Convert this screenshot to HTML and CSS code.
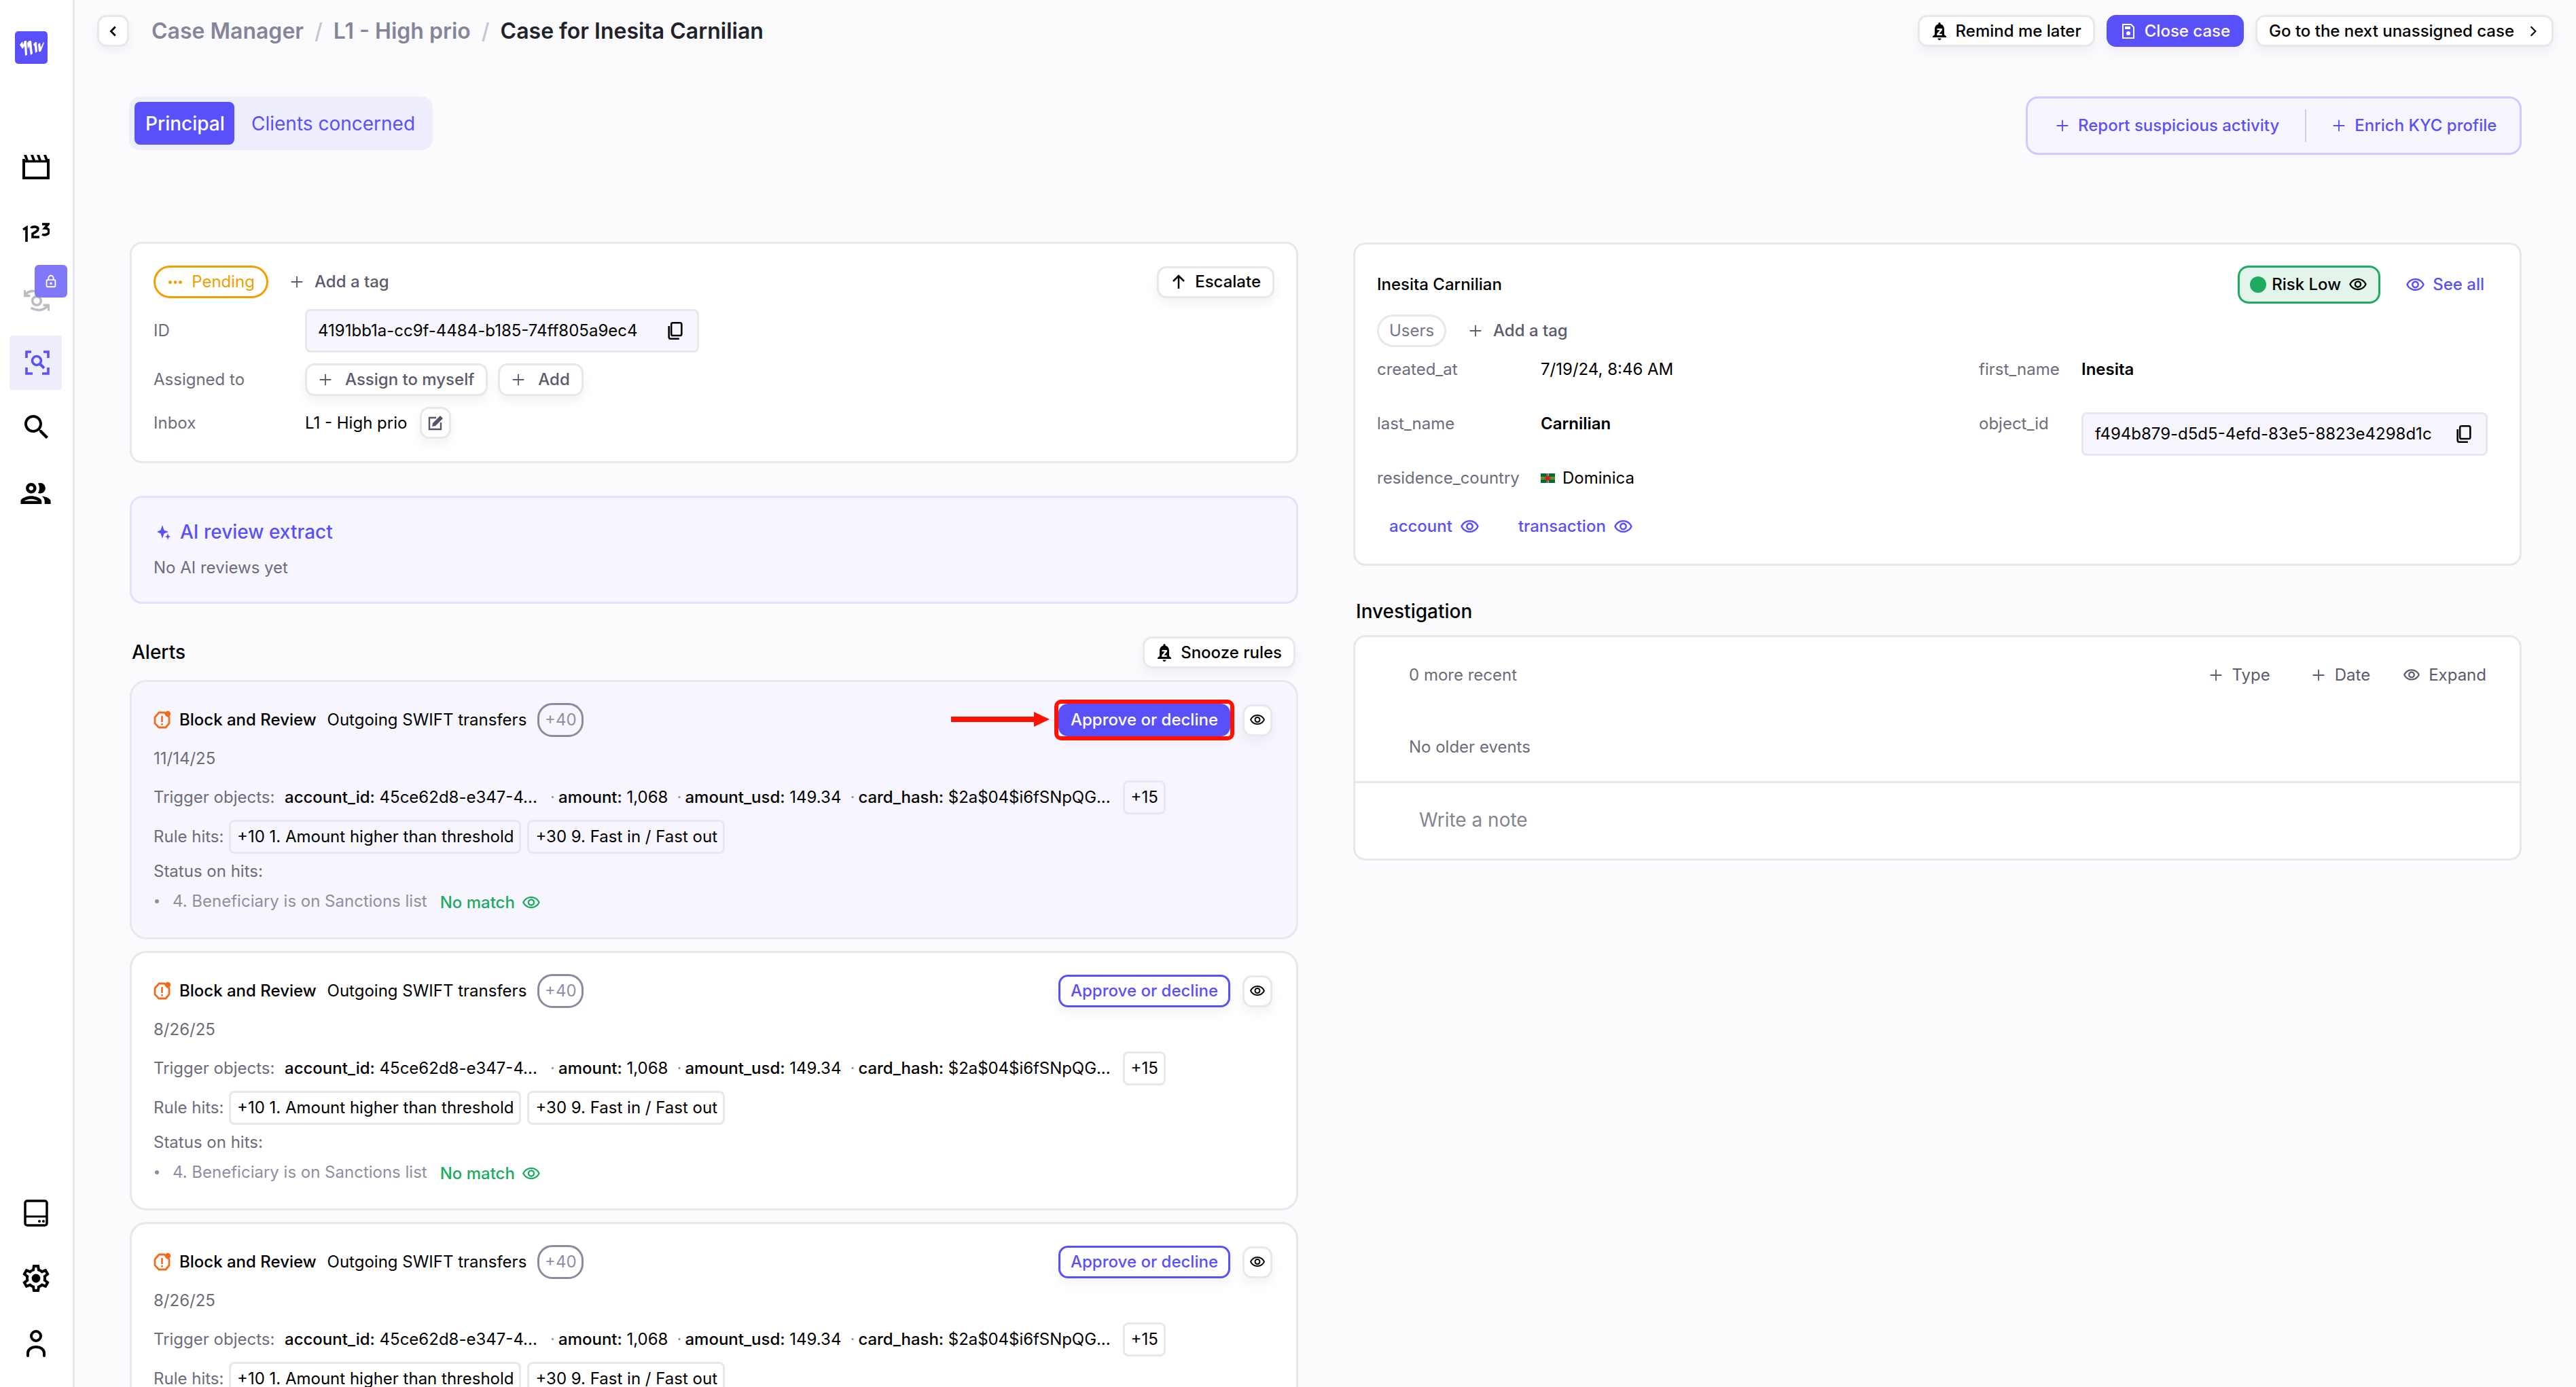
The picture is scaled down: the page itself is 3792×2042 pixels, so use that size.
FILE: index.html
```html
<!DOCTYPE html>
<html lang="en">
<head>
<meta charset="utf-8">
<title>Case for Inesita Carnilian</title>
<link rel="stylesheet" href="styles.css">
</head>
<body>
<svg class="defs" aria-hidden="true">
  <symbol id="eye" viewBox="0 0 24 24"><path fill="currentColor" d="M12 6c3.79 0 7.17 2.13 8.82 5.5C19.17 14.87 15.79 17 12 17s-7.17-2.13-8.82-5.5C4.83 8.13 8.21 6 12 6m0-2C7 4 2.73 7.11 1 11.5 2.73 15.89 7 19 12 19s9.27-3.11 11-7.5C21.27 7.11 17 4 12 4zm0 5c1.38 0 2.5 1.12 2.5 2.5S13.38 14 12 14s-2.5-1.12-2.5-2.5S10.62 9 12 9m0-2c-2.48 0-4.5 2.02-4.5 4.5S9.52 16 12 16s4.5-2.02 4.5-4.5S14.48 7 12 7z"/></symbol>
  <symbol id="plus" viewBox="0 0 24 24"><path fill="none" stroke="currentColor" stroke-width="2.2" d="M12 2v20M2 12h20"/></symbol>
  <symbol id="bell" viewBox="0 0 24 28"><path fill="currentColor" fill-rule="evenodd" d="M12 1c1 0 1.6.8 1.6 1.8v.8C17 4.600 19 7.500 19 11v8l3 2.500V23H2v-1.500L5 19v-8c0-3.500 2-6.400 5.400-7.400v-.8C10.400 1.800 11 1 12 1zM8.500 10v2.200h4.200l-4.400 5.400V20h7.400v-2.200h-4.200l4.400-5.400V10zM9.500 24.500h5c0 1.500-1 2.500-2.500 2.500s-2.500-1-2.500-2.500z"/></symbol>
  <symbol id="copy" viewBox="0 0 24 24"><path fill="none" stroke="currentColor" stroke-width="2.2" d="M9 2h9a2 2 0 0 1 2 2v12a2 2 0 0 1-2 2H9a2 2 0 0 1-2-2V4a2 2 0 0 1 2-2zM4 6v14a2 2 0 0 0 2 2h11"/></symbol>
  <symbol id="warn" viewBox="0 0 26 28"><path fill="none" stroke="currentColor" stroke-width="2.800" d="M8 3h8l7 7v9l-5 6H8l-6-6v-9z"/><path fill="currentColor" d="M11.200 8h2.600v9h-2.600zM11.200 19h2.600v2.600h-2.600z"/><circle cx="21" cy="5" r="4.200" fill="currentColor"/></symbol>
</svg>

<div class="app">
  <nav class="sidebar">
    <div class="logo">
      <svg viewBox="0 0 48 48" class="logo-mark"><path fill="#fff" d="M7 20l4-5 1 5 2-6h3l1 21-3 1-1-14-3 4zM18 17l3-3h3l2 19-3 2-2-13-2 4zM27 19l3-3 2 0 1 14-3 2-1-9zM34 19l3-2 1 7 4-8 1 1-5 13-3 0z"/></svg>
    </div>
    <div class="nav-main">
      <a class="nav-item nav-film">
        <svg viewBox="0 0 40 36" class="ic-film"><path fill="none" stroke="#000" stroke-width="4" d="M2 6v28h36V6"/><path fill="none" stroke="#000" stroke-width="3.400" d="M0 9.500h40"/><path fill="#000" d="M2 0h4l3 8H5zM12 0h4l3 8h-4zM21 0h4l3 8h-4zM31 0h4l3 8h-4z"/></svg>
      </a>
      <a class="nav-item nav-num">
        <svg viewBox="0 0 40 28" class="ic-num"><g fill="none" stroke="#000" stroke-width="3.600"><path d="M1 10l5-3v21"/><path d="M13 8c1-3 10-3 10 1 0 3-4 5-8 7v5h10"/><path d="M29 2h9l-5 6c4 0 6 2 6 5 0 4-6 6-10 4"/></g></svg>
      </a>
      <a class="nav-item nav-locked">
        <svg viewBox="0 0 36 36" class="ic-sync"><g fill="none" stroke="#bdbdc6" stroke-width="3.500"><path d="M2 8c4-6 12-8 22-2M1 1v8h8M34 22c-5 7-14 9-24 4M35 30v-8h-8"/><circle cx="18" cy="16" r="6"/></g></svg>
        <span class="lock">
          <svg viewBox="0 0 24 24" class="ic-lock"><path fill="#fff" fill-rule="evenodd" d="M12 2a5 5 0 0 1 5 5v2h1a2 2 0 0 1 2 2v9a2 2 0 0 1-2 2H6a2 2 0 0 1-2-2v-9a2 2 0 0 1 2-2h1V7a5 5 0 0 1 5-5zm0 2a3 3 0 0 0-3 3v2h6V7a3 3 0 0 0-3-3zM6 11v9h12v-9zm6 2.500a2 2 0 1 1 0 4 2 2 0 0 1 0-4z"/></svg>
        </span>
      </a>
      <a class="nav-item nav-active">
        <svg viewBox="0 0 36 36" class="ic-scan"><g fill="none" stroke="#5a50fa" stroke-width="3.600"><path d="M9 2H2v9M27 2h7v9M2 25v9h9M25 34h9v-9"/><circle cx="17" cy="15" r="6.500"/><path d="M22 20l6 6" stroke-width="4"/></g></svg>
      </a>
      <a class="nav-item nav-search">
        <svg viewBox="0 0 24 24" class="ic-48"><path fill="#000" d="M15.500 14h-.79l-.28-.27C15.410 12.590 16 11.110 16 9.500 16 5.910 13.090 3 9.500 3S3 5.910 3 9.500 5.910 16 9.500 16c1.610 0 3.090-.59 4.230-1.570l.27.28v.79l5 4.990L20.490 19l-4.990-5zm-6 0C7.010 14 5 11.990 5 9.500S7.010 5 9.500 5 14 7.010 14 9.500 11.990 14 9.500 14z"/></svg>
      </a>
      <a class="nav-item nav-users">
        <svg viewBox="0 0 24 24" class="ic-users"><path fill="#000" d="M9 13.750c-2.340 0-7 1.170-7 3.500V19h14v-1.750c0-2.330-4.660-3.500-7-3.500zM4.340 17c.84-.58 2.870-1.250 4.660-1.250s3.820.67 4.660 1.250H4.340zM9 12c1.930 0 3.500-1.570 3.500-3.500S10.930 5 9 5 5.500 6.570 5.500 8.500 7.070 12 9 12zm0-5c.83 0 1.500.67 1.500 1.500S9.830 10 9 10s-1.500-.67-1.500-1.500S8.170 7 9 7zm7.040 6.810c1.160.84 1.960 1.960 1.960 3.440V19h4v-1.750c0-2.020-3.500-3.170-5.960-3.440zM15 12c1.930 0 3.500-1.570 3.500-3.500S16.930 5 15 5c-.54 0-1.040.13-1.500.35.63.89 1 1.980 1 3.150s-.37 2.260-1 3.150c.46.22.96.35 1.500.35z"/></svg>
      </a>
    </div>
    <div class="nav-bottom">
      <a class="nav-item">
        <svg viewBox="0 0 36 40" class="ic-drive"><rect x="2" y="2" width="32" height="36" rx="3" fill="none" stroke="#000" stroke-width="3.500"/><path d="M2 25h32" stroke="#000" stroke-width="3"/><circle cx="23" cy="32" r="2" fill="#000"/><circle cx="29" cy="32" r="2" fill="#000"/></svg>
      </a>
      <a class="nav-item">
        <svg viewBox="0 0 24 24" class="ic-gear"><path fill="#000" d="M19.430 12.980c.04-.32.07-.64.07-.98 0-.34-.03-.66-.07-.98l2.110-1.650c.19-.15.24-.42.12-.64l-2-3.460c-.09-.16-.26-.25-.44-.25-.06 0-.12.01-.17.03l-2.490 1c-.52-.4-1.080-.73-1.690-.98l-.38-2.650C14.460 2.180 14.250 2 14 2h-4c-.25 0-.46.18-.49.42l-.38 2.650c-.61.25-1.170.59-1.690.98l-2.490-1c-.06-.02-.12-.03-.18-.03-.17 0-.34.09-.43.25l-2 3.460c-.13.22-.07.49.12.64l2.110 1.650c-.04.32-.07.65-.07.98 0 .33.03.66.07.98l-2.110 1.650c-.19.15-.24.42-.12.64l2 3.460c.09.16.26.25.44.25.06 0 .12-.01.17-.03l2.490-1c.52.4 1.080.73 1.690.98l.38 2.650c.03.24.24.42.49.42h4c.25 0 .46-.18.49-.42l.38-2.650c.61-.25 1.170-.59 1.690-.98l2.490 1c.06.02.12.03.18.03.17 0 .34-.09.43-.25l2-3.460c.12-.22.07-.49-.12-.64l-2.110-1.650zm-1.980-1.710c.04.31.05.52.05.73 0 .21-.02.43-.05.73l-.14 1.130.89.7 1.080.84-.7 1.210-1.270-.51-1.040-.42-.9.68c-.43.32-.84.56-1.250.73l-1.060.43-.16 1.130-.2 1.350h-1.400l-.19-1.350-.16-1.130-1.060-.43c-.43-.18-.83-.41-1.230-.71l-.91-.7-1.060.43-1.270.51-.7-1.210 1.080-.84.89-.7-.14-1.130c-.03-.31-.05-.54-.05-.74s.02-.43.05-.73l.14-1.130-.89-.7-1.080-.84.7-1.210 1.270.51 1.040.42.9-.68c.43-.32.84-.56 1.250-.73l1.060-.43.16-1.130.2-1.350h1.390l.19 1.350.16 1.130 1.060.43c.43.18.83.41 1.230.71l.91.7 1.060-.43 1.270-.51.7 1.210-1.070.85-.89.7.14 1.130z"/><circle cx="12" cy="12" r="3.200" fill="#000"/></svg>
      </a>
      <a class="nav-item">
        <svg viewBox="0 0 30 40" class="ic-user"><g fill="none" stroke="#000" stroke-width="4" stroke-linecap="round"><circle cx="15" cy="9" r="7"/><path d="M3 38v-4c0-5 5-9 12-9s12 4 12 9v4"/></g></svg>
      </a>
    </div>
  </nav>

  <main class="main">
    <header class="topbar">
      <button class="back">
        <svg viewBox="0 0 24 24" class="ic-chev"><path fill="none" stroke="#000" stroke-width="3" d="M15 5l-7 7 7 7"/></svg>
      </button>
      <div class="crumbs">
        <span class="crumb">Case Manager</span><span class="sep">/</span>
        <span class="crumb">L1 - High prio</span><span class="sep">/</span>
        <span class="crumb-now">Case for Inesita Carnilian</span>
      </div>
      <div class="top-actions">
        <button class="btn"><svg class="ic-bell"><use href="#bell"/></svg>Remind me later</button>
        <button class="btn btn-primary">
          <svg viewBox="0 0 24 24" class="ic-save"><path fill="none" stroke="#fff" stroke-width="2" d="M4 2h12l4 4v16H4z"/><path fill="#fff" d="M7 5h8v4H7z"/><circle cx="12" cy="15" r="3" fill="#fff"/></svg>
          Close case</button>
        <button class="btn">Go to the next unassigned case<svg viewBox="0 0 24 24" class="ic-next"><path fill="none" stroke="#000" stroke-width="2.500" d="M8 4l8 8-8 8"/></svg></button>
      </div>
    </header>

    <section class="tabs-row">
      <div class="tabs">
        <span class="tab tab-on">Principal</span>
        <span class="tab">Clients concerned</span>
      </div>
      <div class="panel-actions">
        <a class="pa"><svg class="ic-plus"><use href="#plus"/></svg>Report suspicious activity</a>
        <i class="pa-sep"></i>
        <a class="pa"><svg class="ic-plus"><use href="#plus"/></svg>Enrich KYC profile</a>
      </div>
    </section>

    <div class="columns">
      <div class="col-left">
        <section class="card case-card">
          <div class="case-head">
            <span class="status"><i class="dots"></i><i class="dots"></i><i class="dots dots-last"></i>Pending</span>
            <a class="add-tag"><svg class="ic-plus"><use href="#plus"/></svg>Add a tag</a>
            <button class="btn btn-right"><svg viewBox="0 0 24 24" class="ic-up"><path fill="none" stroke="#000" stroke-width="2.500" d="M12 22V3M4 11l8-8 8 8"/></svg>Escalate</button>
          </div>
          <div class="field-row"><span class="lbl">ID</span>
            <div class="code code-id"><span>4191bb1a-cc9f-4484-b185-74ff805a9ec4</span><svg class="ic-copy"><use href="#copy"/></svg></div>
          </div>
          <div class="field-row"><span class="lbl">Assigned to</span>
            <div class="btns">
              <button class="btn btn-grey"><svg class="ic-plus"><use href="#plus"/></svg>Assign to myself</button>
              <button class="btn btn-grey"><svg class="ic-plus"><use href="#plus"/></svg>Add</button>
            </div>
          </div>
          <div class="field-row"><span class="lbl">Inbox</span>
            <div class="btns btns-inbox"><span>L1 - High prio</span>
              <button class="btn btn-icon"><svg viewBox="0 0 24 24" class="ic-edit"><path fill="none" stroke="#555568" stroke-width="2.400" d="M13 4H3v17h17V11"/><path fill="#555568" d="M19 1l4 4-11 11-5 1 1-5z"/></svg></button>
            </div>
          </div>
        </section>

        <section class="card ai-card">
          <h3 class="ai-title"><svg viewBox="0 0 20 24" class="ic-spark"><path fill="#5a50fa" d="M8 2l2.500 7.500L17 12l-6.500 2.500L8 22l-2.500-7.500L0 12l5.500-2.500zM16 14l1.200 3.800L20 19l-2.800 1.200L16 24l-1.200-3.800L12 19l2.800-1.200z"/></svg>AI review extract</h3>
          <p class="ai-sub">No AI reviews yet</p>
        </section>

        <div class="alerts-head">
          <h2 class="h2">Alerts</h2>
          <button class="btn"><svg class="ic-bell"><use href="#bell"/></svg>Snooze rules</button>
        </div>

        <div class="alerts">
          <article class="alert alert-open">
            <div class="alert-top">
              <svg class="ic-warn"><use href="#warn"/></svg>
              <b class="strong">Block and Review</b><span class="alert-name">Outgoing SWIFT transfers</span><span class="plus40">+40</span>
              <span class="alert-actions">
                <svg viewBox="0 0 145 22" class="arrow"><path fill="#ff1000" d="M0 7h122V0l23 11-23 11v-7H0z"/></svg>
                <span class="ring"><button class="approve approve-on">Approve or decline</button></span>
                <button class="btn btn-eye"><svg class="ic-eye"><use href="#eye"/></svg></button>
              </span>
            </div>
            <div class="date">11/14/25</div>
            <div class="trig"><span class="lbl-t">Trigger objects:</span>
              <span class="kv kv-a"><b>account_id:</b> 45ce62d8-e347-4...</span><i class="mid">·</i>
              <span class="kv"><b>amount:</b> 1,068</span><i class="mid">·</i>
              <span class="kv"><b>amount_usd:</b> 149.34</span><i class="mid">·</i>
              <span class="kv kv-last"><b>card_hash:</b> $2a$04$i6fSNpQG...</span><span class="chip chip-more">+15</span>
            </div>
            <div class="rules"><span class="lbl-t">Rule hits:</span><span class="chip">+10 1. Amount higher than threshold</span><span class="chip">+30 9. Fast in / Fast out</span></div>
            <div class="st">Status on hits:</div>
            <div class="hit"><i class="bullet"></i><span class="hit-name">4. Beneficiary is on Sanctions list</span><span class="match">No match<svg class="ic-eye-g"><use href="#eye"/></svg></span></div>
          </article>

          <article class="alert">
            <div class="alert-top">
              <svg class="ic-warn"><use href="#warn"/></svg>
              <b class="strong">Block and Review</b><span class="alert-name">Outgoing SWIFT transfers</span><span class="plus40">+40</span>
              <span class="alert-actions">
                <button class="approve">Approve or decline</button>
                <button class="btn btn-eye"><svg class="ic-eye"><use href="#eye"/></svg></button>
              </span>
            </div>
            <div class="date">8/26/25</div>
            <div class="trig"><span class="lbl-t">Trigger objects:</span>
              <span class="kv kv-a"><b>account_id:</b> 45ce62d8-e347-4...</span><i class="mid">·</i>
              <span class="kv"><b>amount:</b> 1,068</span><i class="mid">·</i>
              <span class="kv"><b>amount_usd:</b> 149.34</span><i class="mid">·</i>
              <span class="kv kv-last"><b>card_hash:</b> $2a$04$i6fSNpQG...</span><span class="chip chip-more">+15</span>
            </div>
            <div class="rules"><span class="lbl-t">Rule hits:</span><span class="chip">+10 1. Amount higher than threshold</span><span class="chip">+30 9. Fast in / Fast out</span></div>
            <div class="st">Status on hits:</div>
            <div class="hit"><i class="bullet"></i><span class="hit-name">4. Beneficiary is on Sanctions list</span><span class="match">No match<svg class="ic-eye-g"><use href="#eye"/></svg></span></div>
          </article>

          <article class="alert">
            <div class="alert-top">
              <svg class="ic-warn"><use href="#warn"/></svg>
              <b class="strong">Block and Review</b><span class="alert-name">Outgoing SWIFT transfers</span><span class="plus40">+40</span>
              <span class="alert-actions">
                <button class="approve">Approve or decline</button>
                <button class="btn btn-eye"><svg class="ic-eye"><use href="#eye"/></svg></button>
              </span>
            </div>
            <div class="date">8/26/25</div>
            <div class="trig"><span class="lbl-t">Trigger objects:</span>
              <span class="kv kv-a"><b>account_id:</b> 45ce62d8-e347-4...</span><i class="mid">·</i>
              <span class="kv"><b>amount:</b> 1,068</span><i class="mid">·</i>
              <span class="kv"><b>amount_usd:</b> 149.34</span><i class="mid">·</i>
              <span class="kv kv-last"><b>card_hash:</b> $2a$04$i6fSNpQG...</span><span class="chip chip-more">+15</span>
            </div>
            <div class="rules"><span class="lbl-t">Rule hits:</span><span class="chip">+10 1. Amount higher than threshold</span><span class="chip">+30 9. Fast in / Fast out</span></div>
          </article>
        </div>
      </div>

      <div class="col-right">
        <section class="card person">
          <div class="person-head">
            <span class="name">Inesita Carnilian</span>
            <span class="risk"><i class="risk-dot"></i>Risk Low<svg class="ic-eye-r"><use href="#eye"/></svg></span>
            <a class="see"><svg class="ic-eye-s"><use href="#eye"/></svg>See all</a>
          </div>
          <div class="person-tags">
            <span class="users">Users</span>
            <a class="add-tag"><svg class="ic-plus"><use href="#plus"/></svg>Add a tag</a>
          </div>
          <div class="props">
            <span class="lbl">created_at</span><span>7/19/24, 8:46 AM</span>
            <span class="lbl">first_name</span><b class="val-b">Inesita</b>
            <span class="lbl">last_name</span><b class="val-b">Carnilian</b>
            <span class="lbl">object_id</span>
            <div class="code code-obj"><span>f494b879-d5d5-4efd-83e5-8823e4298d1c</span><svg class="ic-copy"><use href="#copy"/></svg></div>
            <span class="lbl">residence_country</span>
            <span class="country"><svg viewBox="0 0 21 14" class="flag"><rect width="21" height="14" fill="#006b3f"/><path d="M9 0h3v14H9zM0 5.500h21v3H0z" fill="#fcd116"/><path d="M10 0h1v14h-1zM0 6.500h21v1H0z" fill="#111"/><circle cx="10.500" cy="7" r="3.500" fill="#d41c30"/></svg>Dominica</span>
          </div>
          <div class="links">
            <a class="link">account<svg class="ic-eye-s"><use href="#eye"/></svg></a>
            <a class="link">transaction<svg class="ic-eye-s"><use href="#eye"/></svg></a>
          </div>
        </section>

        <h2 class="h2 h2-inv">Investigation</h2>
        <section class="card invest">
          <div class="inv-top">
            <div class="inv-head">
              <span class="lbl">0 more recent</span>
              <span class="inv-tools">
                <a class="tool tool-type"><svg class="ic-plus"><use href="#plus"/></svg>Type</a>
                <a class="tool tool-date"><svg class="ic-plus"><use href="#plus"/></svg>Date</a>
                <a class="tool tool-exp"><svg class="ic-eye-t"><use href="#eye"/></svg>Expand</a>
              </span>
            </div>
            <div class="lbl inv-old">No older events</div>
          </div>
          <div class="note">Write a note</div>
        </section>
      </div>
    </div>
  </main>
</div>
</body>
</html>
```

FILE: styles.css
```css
* { box-sizing: border-box; }
html, body { margin: 0; height: 100%; overflow: hidden; }
body { font-family: Inter, "Liberation Sans", sans-serif; font-size: 24px; line-height: 32px; color: #000; background: #fbfbfe; }
button { font: inherit; color: inherit; }
h2, h3, p { margin: 0; font-weight: 500; }
i { font-style: normal; }
.defs { width: 0; height: 0; display: block; }

.app { display: flex; height: 2042px; overflow: hidden; }

/* sidebar */
.sidebar { width: 110px; flex: none; height: 100%; background: #fff; border-right: 3px solid #e7e7ec; display: flex; flex-direction: column; padding-top: 46px; padding-bottom: 24px; }
.logo { width: 48px; height: 48px; margin-left: 22px; background: #5a50fa; border-radius: 5px; display: flex; align-items: center; justify-content: center; }
.logo-mark { width: 48px; height: 48px; }
.nav-main { margin-top: 104px; display: flex; flex-direction: column; }
.nav-item { position: relative; width: 77px; height: 80px; margin-left: 14px; display: flex; align-items: center; justify-content: center; border-radius: 4px; }
.nav-film { height: 96px; }
.nav-num { height: 96px; }
.nav-locked { height: 104px; }
.nav-active { background: #eeedfc; }
.nav-search { height: 110px; }
.nav-users { height: 84px; }
.ic-film { width: 40px; height: 36px; }
.ic-num { width: 40px; height: 28px; }
.ic-sync { width: 38px; height: 38px; margin-top: 6px; margin-left: 2px; }
.lock { position: absolute; left: 37px; top: 0; width: 48px; height: 48px; background: #8178f9; border-radius: 6px; display: flex; align-items: center; justify-content: center; }
.ic-lock { width: 22px; height: 22px; }
.ic-scan { width: 36px; height: 36px; margin-left: 4px; }
.ic-48 { width: 48px; height: 48px; margin-left: 2px; }
.ic-users { width: 53px; height: 53px; }
.nav-bottom { margin-top: auto; display: flex; flex-direction: column; gap: 16px; }
.ic-drive { width: 36px; height: 40px; }
.ic-gear { width: 48px; height: 48px; }
.ic-user { width: 30px; height: 40px; }

/* main */
.main { flex: 1; min-width: 0; display: flex; flex-direction: column; }
.topbar { display: flex; align-items: center; height: 47px; margin-top: 22px; padding: 0 33px; }
.back { width: 47px; height: 47px; padding: 0; background: #fff; border: 3px solid #e7e7ec; border-radius: 14px; display: flex; align-items: center; justify-content: center; box-shadow: 0 6px 14px rgba(20,20,60,.05); }
.ic-chev { width: 22px; height: 22px; }
.crumbs { margin-left: 33px; font-size: 32px; font-weight: 600; display: flex; align-items: center; gap: 16px; line-height: 47px; }
.crumb { color: #85859a; }
.sep { color: #c4c4cf; font-weight: 500; }
.crumb-now { color: #22222b; }
.top-actions { margin-left: auto; display: flex; gap: 17px; }

.btn { height: 47px; padding: 0 17px; background: #fff; border: 3px solid #e7e7ec; border-radius: 14px; display: inline-flex; align-items: center; gap: 12px; white-space: nowrap; font-weight: 500; box-shadow: 0 8px 16px rgba(20,20,60,.05); }
.btn-primary { background: #5a50fa; border-color: #5a50fa; color: #fff; }
.btn-grey { color: #5b5b6c; height: 48px; padding: 0 17px 0 17px; gap: 19px; font-weight: 500; }
.btn-right { margin-left: auto; padding: 0 17px; }
.btn-icon { width: 46px; height: 47px; padding: 0; justify-content: center; }
.btn-eye { width: 44px; height: 47px; padding: 0; justify-content: center; }
.ic-bell { width: 24px; height: 28px; }
.ic-save { width: 24px; height: 24px; }
.ic-next { width: 20px; height: 20px; margin-left: 6px; }
.ic-plus { width: 20px; height: 20px; flex: none; }
.ic-up { width: 24px; height: 24px; }
.ic-edit { width: 24px; height: 24px; }
.ic-copy { width: 28px; height: 28px; flex: none; }
.ic-eye { width: 24px; height: 24px; }

.tabs-row { display: flex; justify-content: space-between; align-items: flex-start; margin-top: 73px; padding: 0 80px 0 80px; height: 86px; }
.tabs { display: flex; height: 79px; padding: 8px; background: #eeedfc; border-radius: 16px; font-size: 28px; font-weight: 500; width: 447px; }
.tab { height: 63px; padding: 0 0 0 25px; display: flex; align-items: center; color: #5a50fa; font-weight: 400; white-space: nowrap; flex: none; }
.tab-on { width: 147px; padding: 0 0 0 16px; background: #5a50fa; color: #fff; border-radius: 8px; font-weight: 500; }
.panel-actions { width: 730px; height: 86px; display: flex; align-items: center; background: #f7f6fe; border: 3px solid #cdcbff; border-radius: 18px; color: #5a50fa; padding-left: 41px; font-weight: 500; }
.pa { display: flex; align-items: center; gap: 13px; }
.pa-sep { width: 2px; height: 48px; background: #cdcbff; margin: 0 38px 0 38px; }

.columns { display: grid; grid-template-columns: 1720px 1720px; column-gap: 81px; padding-left: 81px; margin-top: 128px; }
.card { background: #fff; border: 3px solid #e7e7ec; border-radius: 18px; }

/* case */
.case-card { height: 326px; padding: 32px 32px 0 32px; }
.case-head { display: flex; align-items: center; height: 48px; }
.status { height: 48px; padding: 0 17px 0 19px; display: inline-flex; align-items: center; border: 3.500px solid #f0a000; border-radius: 24px; color: #f0a000; width: 169px; }
.dots { width: 5px; height: 5px; border-radius: 50%; background: #f0a000; margin-right: 3px; }
.dots-last { margin-right: 14px; }
.add-tag { display: inline-flex; align-items: center; gap: 16px; color: #5b5b6c; margin-left: 32px; font-weight: 500; }
.field-row { display: flex; align-items: center; margin-top: 16px; }
.lbl { color: #6c6c7d; }
.field-row .lbl { width: 223px; flex: none; }
.code { background: #f7f6fe; border: 3px solid #e7e7ec; border-radius: 8px; display: flex; align-items: center; justify-content: space-between; padding: 0 18px 0 16px; }
.code-id { width: 580px; height: 64px; }
.btns { display: flex; align-items: center; gap: 15px; }
.btns-inbox { gap: 19px; }

/* ai */
.ai-card { height: 159px; margin-top: 48px; background: #f7f6fe; border-color: #e3e2fc; padding: 32px 32px 0; }
.ai-title { font-size: 28px; font-weight: 500; color: #5a50fa; display: flex; align-items: center; gap: 14px; height: 36px; padding-left: 5px; }
.ic-spark { width: 20px; height: 24px; }
.ai-sub { margin-top: 19px; color: #6c6c7d; font-weight: 400; }

.alerts-head { display: flex; align-items: center; justify-content: space-between; margin-top: 48px; height: 47px; padding: 0 4px 0 3px; }
.h2 { font-size: 28px; font-weight: 500; line-height: 47px; }
.alerts { margin-top: 17px; display: flex; flex-direction: column; gap: 17px; }

.alert { height: 382px; background: #fff; border: 3px solid #e7e7ec; border-radius: 24px; padding: 31px 35px 0 32px; flex: none; }
.alert-open { background: #f7f6fe; }
.alert-top { display: flex; align-items: center; height: 50px; }
.ic-warn { width: 26px; height: 28px; color: #f26a1b; margin-right: 12px; flex: none; }
.strong { font-weight: 500; }
.alert-name { margin-left: 16px; }
.plus40 { margin-left: 16px; height: 50px; width: 68px; border: 3.500px solid #8b8a9f; border-radius: 22px; color: #8f8fa3; display: flex; align-items: center; justify-content: center; }
.alert-actions { margin-left: auto; display: flex; align-items: center; gap: 18px; position: relative; }
.arrow { position: absolute; right: 328px; top: 12px; width: 145px; height: 22px; }
.approve { width: 253px; height: 48px; border: 3px solid #5a50fa; background: #fff; color: #5a50fa; border-radius: 14px; padding: 0; font-weight: 500; white-space: nowrap; box-shadow: 0 8px 16px rgba(20,20,60,.05); }
.approve-on { background: #5a50fa; color: #fff; display: block; }
.ring { display: block; outline: 6px solid #ff1000; outline-offset: 0; border-radius: 4px; }
.date { margin-top: 16px; color: #6c6c7d; }
.trig { display: flex; align-items: center; height: 50px; margin-top: 16px; white-space: pre; }
.lbl-t { color: #6c6c7d; white-space: nowrap; flex: none; }
.trig .lbl-t { width: 193px; }
b { font-weight: 500; }
.kv-a { width: 391px; flex: none; }
.mid { color: #8f8fa3; width: 12px; flex: none; }
.kv { flex: none; margin-right: 13px; }
.kv-a { margin-right: 0; }
.kv-last { margin-right: 0; letter-spacing: -.05px; }
.chip { height: 50px; padding: 0 8px 0 9px; background: transparent; border: 3px solid #e7e7ec; border-radius: 8px; display: inline-flex; align-items: center; white-space: nowrap; flex: none; font-weight: 400; }
.chip-more { margin-left: 18px; }
.rules { display: flex; align-items: center; gap: 9px; height: 50px; margin-top: 8px; }
.rules .lbl-t { width: 102px; }
.st { margin-top: 10px; color: #6c6c7d; }
.hit { display: flex; align-items: center; margin-top: 10px; color: #8f8fa3; }
.bullet { width: 6px; height: 6px; border-radius: 50%; background: #8f8fa3; margin: 0 20px 0 2px; }
.hit-name { flex: none; }
.match { margin-left: 19px; color: #1dab61; display: inline-flex; align-items: center; gap: 10px; margin-top: 4px; font-weight: 500; }
.ic-eye-g { width: 28px; height: 28px; }

/* right */
.person { height: 476px; margin-top: 1px; padding: 31px 47px 0 32px; }
.person-head { display: flex; align-items: center; height: 56px; padding-right: 5px; }
.name { font-weight: 500; }
.risk { margin-left: auto; width: 210px; height: 56px; background: #e3f4ea; border: 3.500px solid #1dab61; border-radius: 16px; display: flex; align-items: center; padding-left: 15px; font-weight: 500; }
.risk-dot { width: 24px; height: 24px; border-radius: 50%; background: #1dab61; margin-right: 8px; }
.ic-eye-r { width: 28px; height: 28px; margin-left: 11px; }
.see { margin-left: 37px; display: flex; align-items: center; gap: 11px; color: #5a50fa; font-weight: 500; }
.ic-eye-s { width: 29px; height: 29px; }
.person-tags { display: flex; align-items: center; margin-top: 16px; height: 48px; }
.users { width: 102px; height: 48px; border: 3.500px solid #e7e7ec; border-radius: 24px; color: #75758a; display: flex; align-items: center; justify-content: center; }
.person-tags .add-tag { margin-left: 33px; }
.props { display: grid; grid-template-columns: 241px 645px 151px 1fr; grid-template-rows: 32px 32px 32px; row-gap: 48px; margin-top: 17px; }
.val-b { font-weight: 600; }
.code-obj { height: 64px; margin-top: -1px; padding: 0 18px 0 17px; }
.country { display: flex; align-items: center; gap: 11px; }
.flag { width: 21px; height: 14px; }
.links { display: flex; margin-top: 39px; padding-left: 18px; gap: 57px; }
.link { display: flex; align-items: center; gap: 11px; color: #5a50fa; font-weight: 500; }

.h2-inv { margin-top: 44px; margin-left: 4px; line-height: 47px; height: 58px; }
.invest { height: 332px; display: flex; flex-direction: column; }
.inv-top { height: 215px; padding: 40px 49px 0 79px; border-bottom: 3px solid #e7e7ec; }
.inv-head { display: flex; justify-content: space-between; align-items: center; height: 32px; }
.inv-tools { display: flex; color: #5b5b6c; font-weight: 400; }
.tool { display: flex; align-items: center; gap: 14px; }
.tool-date { margin-left: 61px; }
.tool-exp { margin-left: 48px; gap: 12px; }
.ic-eye-t { width: 26px; height: 26px; }
.inv-old { margin-top: 74px; }
.note { padding: 36px 0 0 94px; font-size: 28px; line-height: 36px; color: #85858f; }
```
